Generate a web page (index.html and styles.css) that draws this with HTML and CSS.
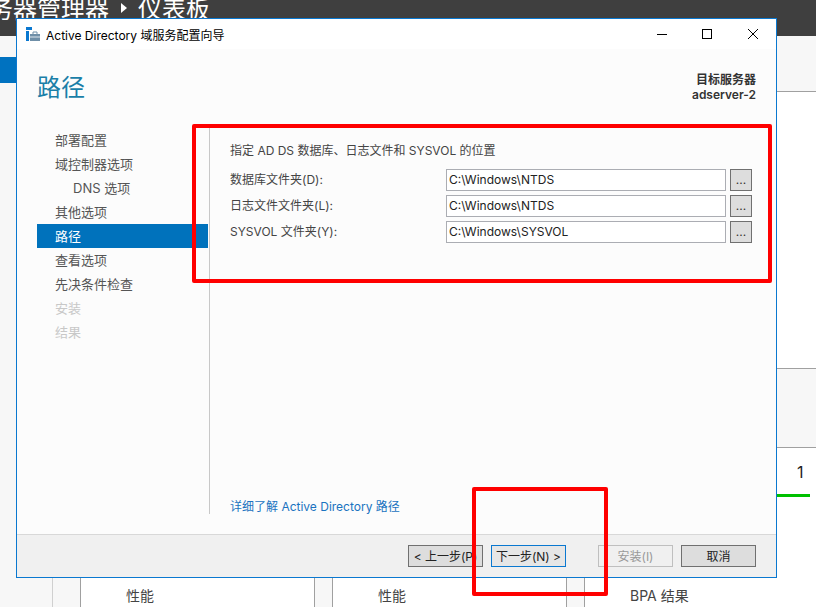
FILE: index.html
```
<!DOCTYPE html>
<html lang="zh-CN">
<head>
<meta charset="utf-8">
<title>Active Directory 域服务配置向导</title>
<link rel="stylesheet" href="styles.css">
</head>
<body>
<div class="backdrop">
  <header class="topbar">
    <span class="crumb">务器管理器</span>
    <svg class="crumb-arrow" width="6" height="10" viewBox="0 0 6 10"><path d="M0 0l6 5-6 5z" fill="#fff"/></svg>
    <span class="crumb crumb-page">仪表板</span>
  </header>
  <div class="shell">
    <nav class="side"><div class="side-active"></div></nav>
    <main class="dash">
      <section class="panel"></section>
      <section class="tiles">
        <article class="tile"><div class="tile-label">性能</div></article>
        <article class="tile"><div class="tile-label">性能</div></article>
        <article class="tile">
          <div class="tile-count">1</div>
          <div class="tile-bar"></div>
          <div class="tile-label tile-label-low">BPA 结果</div>
        </article>
      </section>
    </main>
  </div>
</div>

<div class="dialog">
  <div class="titlebar">
    <svg class="app-icon" width="14" height="14" viewBox="0 0 14 14">
      <rect x="0" y="0" width="6" height="3" fill="#0a78d0"/>
      <rect x="0" y="4" width="3" height="10" fill="#0a78d0"/>
      <rect x="4" y="7" width="10" height="7" fill="#6f8fa8"/>
      <rect x="4" y="9.5" width="10" height="1" fill="#dfe8ee"/>
      <path d="M7 7V5h4v2" fill="none" stroke="#6f8fa8" stroke-width="1"/>
    </svg>
    <span class="title-text">Active Directory 域服务配置向导</span>
    <div class="win-controls">
      <svg width="10" height="10" viewBox="0 0 10 10"><path d="M0 5.5h10" stroke="#000" fill="none"/></svg>
      <svg width="10" height="10" viewBox="0 0 10 10"><rect x=".5" y=".5" width="9" height="9" stroke="#000" fill="none"/></svg>
      <svg class="win-close" width="10" height="10" viewBox="0 0 10 10"><path d="M0 0l10 10M10 0L0 10" stroke="#000" fill="none"/></svg>
    </div>
  </div>
  <div class="body">
    <div class="page-head">
      <h1 class="page-title">路径</h1>
      <div class="target">
        <div>目标服务器</div>
        <div>adserver-2</div>
      </div>
    </div>
    <div class="columns">
      <ul class="steps">
        <li class="step">部署配置</li>
        <li class="step">域控制器选项</li>
        <li class="step step-sub">DNS 选项</li>
        <li class="step">其他选项</li>
        <li class="step step-current">路径</li>
        <li class="step">查看选项</li>
        <li class="step">先决条件检查</li>
        <li class="step step-off">安装</li>
        <li class="step step-off">结果</li>
      </ul>
      <div class="content">
        <p class="lead">指定 AD DS 数据库、日志文件和 SYSVOL 的位置</p>
        <div class="form">
          <div class="row">
            <label class="row-label">数据库文件夹(D):</label>
            <div class="field">C:\Windows\NTDS</div>
            <button class="browse">...</button>
          </div>
          <div class="row">
            <label class="row-label">日志文件文件夹(L):</label>
            <div class="field">C:\Windows\NTDS</div>
            <button class="browse">...</button>
          </div>
          <div class="row">
            <label class="row-label">SYSVOL 文件夹(Y):</label>
            <div class="field">C:\Windows\SYSVOL</div>
            <button class="browse">...</button>
          </div>
        </div>
        <a class="more">详细了解 Active Directory 路径</a>
      </div>
    </div>
  </div>
  <div class="footer">
    <button class="btn">&lt; 上一步(P)</button>
    <button class="btn btn-default">下一步(N) &gt;</button>
    <button class="btn btn-disabled">安装(I)</button>
    <button class="btn">取消</button>
  </div>
</div>

<div class="mark mark-form"></div>
<div class="mark mark-next"></div>
</body>
</html>
```
FILE: styles.css
```
* { box-sizing: border-box; }
html, body { margin: 0; height: 100%; }
body {
  width: 816px;
  height: 607px;
  overflow: hidden;
  position: relative;
  background: #f7f7f7;
  font-family: Inter, "Noto Sans CJK SC", sans-serif;
  font-size: 12px;
  color: #444;
}
.backdrop { display: flex; flex-direction: column; height: 607px; overflow: hidden; }
.topbar {
  height: 36px;
  flex: none;
  background: #3f3f3f;
  color: #fff;
  display: flex;
  align-items: center;
  margin-left: -11px;
  overflow: hidden;
  padding-bottom: 20px;
}
.crumb { font-size: 24px; line-height: 28px; white-space: nowrap; font-family: "Noto Sans CJK SC", sans-serif; }
.crumb-arrow { margin: 0 11px 0 12px; flex: none; }
.shell { flex: 1; display: flex; min-height: 0; }
.side { width: 53px; flex: none; border-right: 1px solid #d0d0d0; padding-top: 21px; }
.side-active { height: 26px; background: #0072c0; }
.dash { flex: 1; padding-left: 27px; display: flex; flex-direction: column; min-width: 0; }
.panel {
  height: 278px;
  margin-top: 55px;
  background: #fff;
  border-top: 1px solid #a0a0a0;
  border-bottom: 1px solid #a0a0a0;
  flex: none;
}
.tiles { display: flex; gap: 17px; margin-top: 78px; flex: 1; }
.tile {
  width: 235px;
  flex: none;
  background: #fff;
  border: 1px solid #a0a0a0;
  border-bottom: 0;
  position: relative;
  padding-top: 138px;
}
.tile-label { font-size: 14px; line-height: 20px; padding-left: 45px; color: #444; }
.tile-count { position: absolute; top: 13px; left: 212px; font-size: 16px; line-height: 22px; color: #222; }
.tile-bar { position: absolute; top: 46px; left: 0; width: 225px; height: 3px; background: #00c000; }

.dialog {
  position: absolute;
  left: 16px;
  top: 18px;
  width: 761px;
  height: 560px;
  background: #fcfcfc;
  border: 1px solid #0a78d0;
  display: flex;
  flex-direction: column;
}
.titlebar {
  height: 30px;
  flex: none;
  background: #fff;
  display: flex;
  align-items: center;
  padding-left: 9px;
  color: #000;
}
.app-icon { flex: none; }
.title-text { margin-left: 6px; font-size: 12px; white-space: nowrap; }
.win-controls { margin-left: auto; display: flex; gap: 35px; padding-right: 18px; }
.win-close { margin-left: 1px; }
.body { flex: 1; display: flex; flex-direction: column; min-height: 0; }
.page-head {
  display: flex;
  justify-content: space-between;
  height: 77px;
  padding: 21px 20px 0 20px;
  flex: none;
}
.page-title {
  margin: 0;
  font-size: 24px;
  line-height: 32px;
  font-weight: 400;
  color: #1a7fa8;
  font-family: "Noto Sans CJK SC", sans-serif;
}
.target { text-align: right; font-size: 12px; line-height: 15px; font-weight: 600; color: #333; padding-top: 2px; }
.columns { flex: 1; display: flex; min-height: 0; padding-bottom: 20px; }
.steps { list-style: none; margin: 2px 1px 0 20px; padding: 0; width: 171px; flex: none; }
.step { height: 24px; line-height: 24px; padding-left: 18px; font-size: 13px; color: #555; }
.step-sub { padding-left: 36px; }
.step-current { background: #0072bc; color: #fff; }
.step-off { color: #c8c8c8; }
.content {
  flex: 1;
  border-left: 1px solid #c8c8c8;
  padding: 15px 24px 0 20px;
  display: flex;
  flex-direction: column;
}
.lead { margin: 0 0 8px; line-height: 20px; font-size: 12px; }
.form { display: flex; flex-direction: column; gap: 4px; }
.row { display: flex; align-items: stretch; height: 22px; }
.row-label { width: 216px; flex: none; line-height: 22px; font-size: 12px; }
.field {
  width: 280px;
  flex: none;
  background: #fff;
  border: 1px solid #abadb3;
  padding-left: 2px;
  line-height: 20px;
  font-size: 12px;
  color: #222;
}
.browse {
  width: 22px;
  height: 22px;
  flex: none;
  margin-left: 4px;
  padding: 0;
  background: #ddd;
  border: 1px solid #707070;
  font: inherit;
  color: #333;
  line-height: 20px;
}
.more { margin-top: auto; line-height: 16px; font-size: 12px; color: #1a73c0; margin-bottom: -1px; }
.footer {
  height: 43px;
  flex: none;
  background: #f0f0f0;
  border-top: 1px solid #d8d8d8;
  display: flex;
  align-items: flex-start;
  padding: 10px 20px 0 0;
  justify-content: flex-end;
}
.btn {
  width: 75px;
  height: 22px;
  padding: 1px 0 0;
  background: #ddd;
  border: 1px solid #707070;
  font: inherit;
  color: #222;
  line-height: 20px;
  margin-left: 8px;
}
.btn-default { background: #e6e6e6; border-color: #0a78d0; }
.btn-disabled { background: #f0f0f0; border-color: #bfbfbf; color: #999; margin-left: 32px; }
.mark {
  position: absolute;
  border: 4px solid #ff0000;
  border-radius: 2px;
  pointer-events: none;
}
.mark-form { left: 192px; top: 124px; width: 580px; height: 159px; }
.mark-next { left: 472px; top: 487px; width: 136px; height: 109px; }
```
